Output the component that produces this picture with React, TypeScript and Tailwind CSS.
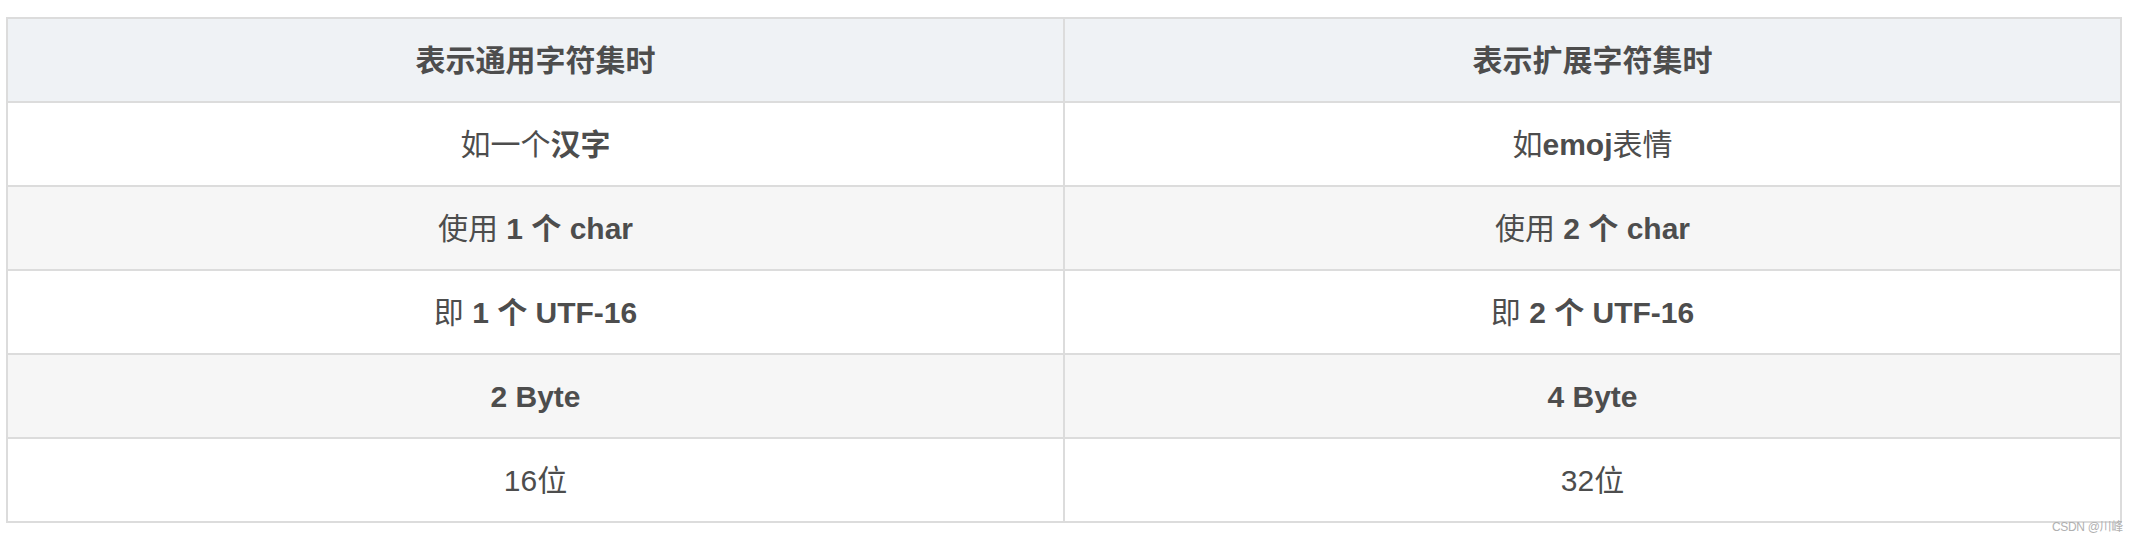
import React from "react";

const font = { fontFamily: '"Liberation Sans", Arial, "Noto Sans CJK SC", sans-serif' };

type Cell = React.ReactNode;

const rows: { bg: string; cells: [Cell, Cell] }[] = [
  {
    bg: "bg-white",
    cells: [
      <>如一个<b>汉字</b></>,
      <>如<b>emoj</b>表情</>,
    ],
  },
  {
    bg: "bg-[#f6f6f6]",
    cells: [
      <>使用 <b>1 个 char</b></>,
      <>使用 <b>2 个 char</b></>,
    ],
  },
  {
    bg: "bg-white",
    cells: [
      <>即 <b>1 个 UTF-16</b></>,
      <>即 <b>2 个 UTF-16</b></>,
    ],
  },
  {
    bg: "bg-[#f6f6f6]",
    cells: [<b>2 Byte</b>, <b>4 Byte</b>],
  },
  {
    bg: "bg-white",
    cells: [<>16位</>, <>32位</>],
  },
];

export default function App() {
  return (
    <div className="relative w-[2138px] h-[542px] bg-white pt-[17px] pl-[6px]" style={font}>
      <div className="grid grid-cols-[1055px_1055px] gap-[2px] p-[2px] bg-[#dcdcdc] w-[2116px] text-[30px] text-[#4d4d4d]">
        <div className="h-[82px] flex items-center justify-center bg-[#eff2f5] font-bold">表示通用字符集时</div>
        <div className="h-[82px] flex items-center justify-center bg-[#eff2f5] font-bold">表示扩展字符集时</div>
        {rows.map((r, i) => (
          <React.Fragment key={i}>
            <div className={`h-[82px] flex items-center justify-center whitespace-pre ${r.bg}`}>{r.cells[0]}</div>
            <div className={`h-[82px] flex items-center justify-center whitespace-pre ${r.bg}`}>{r.cells[1]}</div>
          </React.Fragment>
        ))}
      </div>
      <div className="absolute right-[15px] top-[521px] text-[12px] tracking-[-0.3px] text-[#b0b0b0] leading-none">
        CSDN @川峰
      </div>
    </div>
  );
}
